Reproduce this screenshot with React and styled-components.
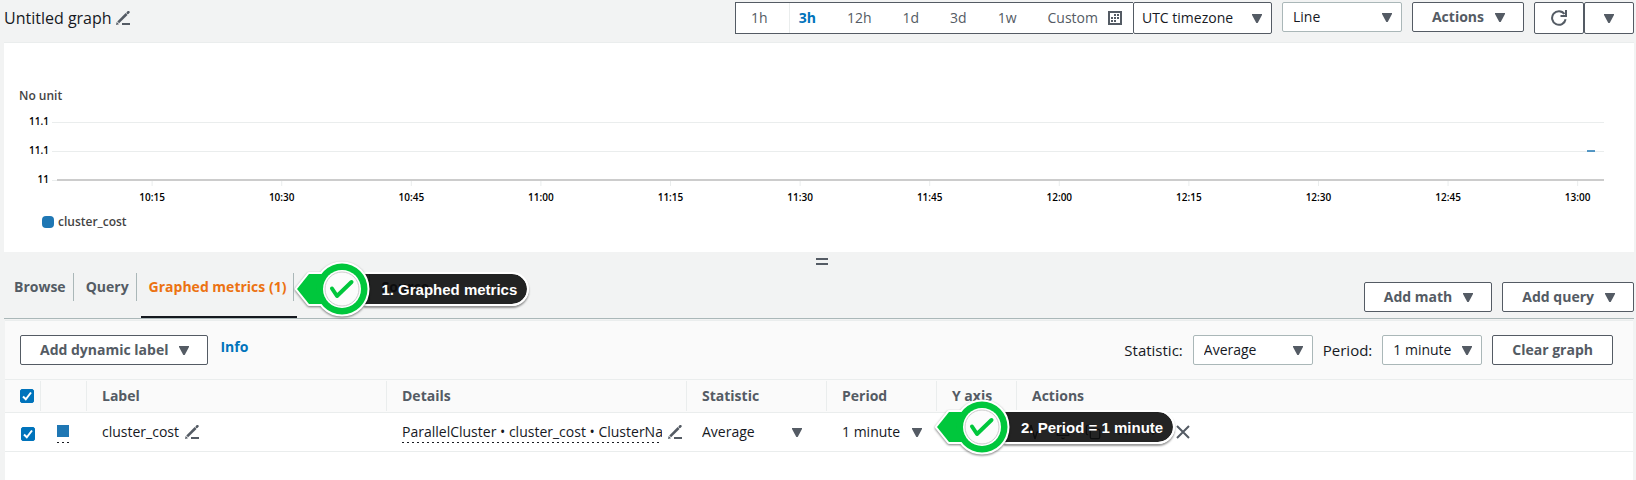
import React from "react";
import styled, { createGlobalStyle, css } from "styled-components";
import { Activity, Bell, ChevronDown, ChevronUp, Copy } from "lucide-react";

const color = {
  page: "#f2f3f3",
  text: "#16191f",
  muted: "#545b64",
  line: "#eaeded",
  outline: "#aab7b8",
  link: "#0073bb",
  accent: "#ec7211",
  series: "#1f77b4",
  green: "#00c73c",
};

const GlobalStyle = createGlobalStyle`
  *, *::before, *::after { box-sizing: border-box; }
  body {
    margin: 0;
    background: ${color.page};
    color: ${color.text};
    font-family: "Open Sans", "Noto Sans", sans-serif;
    font-size: 14px;
    line-height: 20px;
  }
  button, select, input { font: inherit; color: inherit; margin: 0; }
  button { cursor: pointer; }
`;

const Page = styled.div`
  display: flex;
  flex-direction: column;
  min-height: 100vh;
  padding: 0 2px 0 4px;
`;

/* ---------- icons ---------- */

const Arrow = styled.svg.attrs({ viewBox: "0 0 10 9", "aria-hidden": true })`
  width: 10px;
  height: 9px;
  flex: none;
  fill: ${color.muted};
`;

const Caret = (props) => (
  <Arrow {...props}>
    <path d="M0 0h10v1L5.700 9H4.300L0 1z" />
  </Arrow>
);

const PencilIcon = () => (
  <svg width="14" height="14" viewBox="0 0 14 14" fill="none" stroke={color.muted} aria-hidden="true">
    <path d="M2.2 11.3 10.6 3" strokeWidth="2.6" />
    <path d="M11.8 1.800 12.4 1.200" strokeWidth="2.6" strokeLinecap="round" />
    <path d="M0 14 .7 10.9 3 13.2z" fill={color.muted} stroke="none" />
    <path d="M6 13h8" strokeWidth="2" />
  </svg>
);

const CalendarIcon = () => (
  <svg width="14" height="14" viewBox="0 0 14 14" fill="none" stroke={color.muted} aria-hidden="true">
    <rect x="1" y="1" width="12" height="12" strokeWidth="2" />
    <path d="M6 4h5M3 7h8M3 10h5" strokeWidth="2" strokeDasharray="2 1" />
  </svg>
);

const RefreshIcon = () => (
  <svg width="16" height="16" viewBox="0 0 16 16" fill="none" stroke={color.muted} strokeWidth="2" aria-hidden="true">
    <path d="M14.6 9.2A6.8 6.8 0 1 1 13.4 4" />
    <path d="M15 0v6H9.500" />
  </svg>
);

const CloseIcon = () => (
  <svg width="14" height="14" viewBox="0 0 14 14" fill="none" stroke={color.muted} strokeWidth="2" aria-hidden="true">
    <path d="M1 1l12 12M13 1 1 13" />
  </svg>
);

/* ---------- controls ---------- */

const Button = styled.button`
  display: inline-flex;
  align-items: center;
  justify-content: center;
  gap: 11px;
  height: 30px;
  padding: 0 ${(p) => (p.$menu ? 18 : 19)}px 0 19px;
  border: 1px solid ${color.muted};
  border-radius: 2px;
  background: #fff;
  color: ${color.muted};
  font-weight: 700;
  white-space: nowrap;
`;

const IconButton = styled.button`
  display: inline-flex;
  align-items: center;
  justify-content: center;
  padding: 0;
  border: 0;
  background: none;
  color: ${color.muted};
`;

const SplitButton = styled.div`
  display: flex;

  ${IconButton} {
    width: 50px;
    height: 32px;
    border: 1px solid ${color.muted};
    border-radius: 2px;
    background: #fff;
  }
`;

const SelectFrame = styled.span`
  display: inline-grid;
  align-items: center;
  width: ${(p) => p.$width}px;

  > * { grid-area: 1 / 1; }
  > svg {
    justify-self: end;
    margin-right: ${(p) => (p.$variant === "plain" ? 0 : 10)}px;
    pointer-events: none;
  }
`;

const NativeSelect = styled.select`
  appearance: none;
  width: 100%;
  height: ${(p) => (p.$variant === "dark" ? 32 : 30)}px;
  padding: 0 ${(p) => (p.$variant === "plain" ? 0 : 20)}px 0 ${(p) => ({ plain: 0, dark: 8, light: 10 })[p.$variant]}px;
  border: 1px solid ${color.outline};
  border-radius: 2px;
  background: #fff;
  ${(p) => p.$variant === "dark" && css`border-color: ${color.muted};`}
  ${(p) => p.$variant === "plain" && css`border: 0; background: none;`}
`;

const Select = ({ id, label, width, variant = "light", options }) => (
  <SelectFrame $width={width} $variant={variant}>
    <NativeSelect id={id} aria-label={label} $variant={variant}>
      {options.map((o) => (
        <option key={o}>{o}</option>
      ))}
    </NativeSelect>
    <Caret />
  </SelectFrame>
);

const Checkbox = styled.input.attrs({ type: "checkbox" })`
  appearance: none;
  display: block;
  width: 14px;
  height: 14px;
  border: 1px solid ${color.muted};
  border-radius: 2px;
  background: #fff;

  &:checked {
    border-color: ${color.link};
    background: ${color.link}
      url("data:image/svg+xml,%3Csvg xmlns='http://www.w3.org/2000/svg' viewBox='0 0 12 12' fill='none' stroke='white' stroke-width='2'%3E%3Cpath d='M2 6.500l2.800 2.800L10 2.500'/%3E%3C/svg%3E")
      center / 12px no-repeat;
  }
`;

/* ---------- header ---------- */

const Header = styled.header`
  display: flex;
  align-items: flex-start;
  justify-content: space-between;
  height: 42px;
  padding-top: 2px;
`;

const Title = styled.h1`
  display: flex;
  align-items: center;
  gap: 4px;
  margin: 0;
  font-size: 16px;
  font-weight: 400;
  line-height: 32px;
`;

const Controls = styled.div`
  display: flex;
  align-items: flex-start;
  gap: 10px;
`;

const RangeGroup = styled.div`
  display: flex;
`;

const Ranges = styled.div`
  display: flex;
  height: 32px;
  padding-right: 11px;
  border: 1px solid ${color.muted};
  border-right: 0;
  background: #fff;
`;

const RangeButton = styled.button`
  display: flex;
  align-items: center;
  gap: 10px;
  padding: 0 0 0 15px;
  margin-right: 16px;
  border: 0;
  background: none;
  color: ${color.muted};

  &:last-child { margin-right: 0; }

  ${(p) =>
    p.$active &&
    css`
      margin-left: 5px;
      padding-left: 9px;
      border-left: 1px solid ${color.line};
      color: ${color.link};
      font-weight: 700;
    `}
`;

/* ---------- chart ---------- */

const ChartPanel = styled.section`
  padding: 45px 30px 22px 15px;
  border-top: 1px solid ${color.line};
  background: #fff;
  font-size: 12px;
  font-weight: 600;
  line-height: 16px;
  color: #444;
`;

const Plot = styled.svg`
  display: block;
  width: calc(100% - 38px);
  height: 106px;
  margin-left: 38px;
  overflow: visible;

  text {
    font-size: 10px;
    fill: #000;
  }
  .grid { stroke: ${color.line}; }
  .axis { stroke: #ccc; stroke-width: 2; }
  .series { stroke: ${color.series}; stroke-width: 2; opacity: 0.75; }
`;

const Legend = styled.div`
  display: flex;
  align-items: center;
  gap: 4px;
  margin: 4px 0 0 23px;
`;

const LegendMark = styled.span`
  width: 12px;
  height: 12px;
  border-radius: 4px;
  background: ${color.series};
`;

const yTicks = [
  { label: "11.1", y: 18 },
  { label: "11.1", y: 47 },
  { label: "11", y: 76 },
];
const xTicks = ["10:15", "10:30", "10:45", "11:00", "11:15", "11:30", "11:45", "12:00", "12:15", "12:30", "12:45", "13:00"];
const START = 6.15;
const STEP = 8.377;

const Chart = () => (
  <Plot role="img" aria-label="cluster_cost over the last three hours">
    {yTicks.map(({ label, y }) => (
      <g key={y}>
        <line className="grid" x1="-5" x2="100%" y1={y + 0.5} y2={y + 0.5} />
        <text x="-8" y={y + 3} textAnchor="end">{label}</text>
      </g>
    ))}
    <line className="axis" x1="0" x2="100%" y1="76" y2="76" />
    {xTicks.map((label, i) => {
      const x = `${START + i * STEP}%`;
      return (
        <g key={label}>
          <line className="grid" x1={x} x2={x} y1="77" y2="82" />
          <text x={x} y="97" textAnchor="middle">{label}</text>
        </g>
      );
    })}
    <line className="series" x1="98.9%" x2="99.42%" y1="47" y2="47" />
  </Plot>
);

/* ---------- splitter and tabs ---------- */

const Splitter = styled.div`
  display: flex;
  justify-content: center;
  height: 16px;
  padding: 6px 0 0 6px;

  &::before {
    content: "";
    width: 12px;
    height: 7px;
    border: solid ${color.muted};
    border-width: 2px 0;
  }
`;

const TabBar = styled.div`
  display: flex;
  justify-content: space-between;
  height: 51px;
  padding-left: 2px;
  border-bottom: 1px solid ${color.outline};
`;

const Tabs = styled.nav`
  display: flex;
  gap: 1px;
`;

const TabItem = styled.div`
  display: flex;
  position: relative;
`;

const Tab = styled.button`
  display: flex;
  align-items: flex-start;
  padding: 5px 3px 0 8px;
  border: 0;
  border-bottom: 2px solid ${(p) => (p.$active ? color.text : "transparent")};
  background: none;
  color: ${(p) => (p.$active ? color.accent : color.muted)};
  font-weight: 700;
  white-space: nowrap;

  span {
    padding-right: 7px;
    border-right: 1px solid ${(p) => (p.$last ? "transparent" : color.outline)};
    line-height: 28px;
  }
`;

const TabActions = styled.div`
  display: flex;
  align-items: flex-end;
  gap: 10px;
  padding-bottom: 6px;
`;

/* ---------- metrics panel ---------- */

const MetricsPanel = styled.section`
  flex: 1;
  margin: 1px 1px 0;
  border-top: 1px solid ${color.line};
  background: #fff;
`;

const Toolbar = styled.div`
  display: flex;
  justify-content: space-between;
  padding: 14px 20px 14px 15px;
  background: #fafafa;
`;

const ToolbarStart = styled.div`
  display: flex;
  align-items: flex-start;
  gap: 12px;
`;

const ToolbarEnd = styled.div`
  display: flex;
  align-items: center;
  gap: 10px;
`;

const FieldLabel = styled.label`
  font-size: 15px;
`;

const InfoLink = styled.a`
  color: ${color.link};
  font-weight: 700;
  line-height: 24px;
  text-decoration: none;
`;

const Table = styled.table`
  width: 100%;
  table-layout: fixed;
  border-collapse: separate;
  border-spacing: 0;
`;

const Col = styled.col`
  width: ${(p) => (p.$width ? `${p.$width}px` : "auto")};
`;

const HeadCell = styled.th`
  height: 34px;
  padding: 1px 0;
  border: solid ${color.line};
  border-width: 1px 0;
  background: #fafafa;
  color: ${color.muted};
  font-weight: 700;
  text-align: left;
`;

const HeadInner = styled.div`
  display: flex;
  align-items: center;
  height: 30px;
  padding-left: 15px;
  border-right: 1px solid ${(p) => (p.$last ? "transparent" : color.line)};
`;

const Cell = styled.td`
  position: relative;
  height: 39px;
  padding: ${(p) => (p.$marker ? 4 : 0)}px 0 0 ${(p) => p.$pad ?? (p.$marker ? 16 : 15)}px;
  border-bottom: 1px solid ${color.line};
`;

const CellRow = styled.div`
  display: flex;
  align-items: center;
  gap: 6px;
`;

const dots = css`
  repeating-linear-gradient(90deg, ${color.text} 0 2px, transparent 2px 5px) bottom / 100% 1px no-repeat
`;

const Swatch = styled.button`
  display: block;
  width: 12px;
  height: 18px;
  padding: 0;
  border: 0;
  background: ${dots}, linear-gradient(${color.series} 0 0) top / 100% 12px no-repeat;
`;

const DetailText = styled.span`
  width: 260px;
  height: 21px;
  overflow: hidden;
  background: ${dots};
  white-space: nowrap;
`;

const RowActions = styled.div`
  display: flex;

  ${IconButton} {
    width: 30px;
    height: 30px;
  }
`;

/* ---------- callouts ---------- */

const CalloutBox = styled.div`
  position: absolute;
  z-index: 2;
  top: ${(p) => p.$top}px;
  left: 100%;
  display: flex;
  align-items: center;
  margin-left: -3px;
  pointer-events: none;
`;

const CalloutMark = styled.svg`
  position: relative;
  z-index: 1;
  flex: none;
  overflow: visible;
  filter: drop-shadow(0 1px 1px rgba(0, 0, 0, 0.5));
`;

const CalloutLabel = styled.span`
  height: 34px;
  margin-left: -6px;
  padding: 0 10px 0 17px;
  border: 2px solid #fff;
  border-left: 0;
  border-radius: 0 17px 17px 0;
  background: rgba(0, 0, 0, 0.86);
  background-clip: padding-box;
  box-shadow: 0 2px 2px rgba(0, 0, 0, 0.4);
  color: #fff;
  font-family: "Liberation Sans", sans-serif;
  font-size: 15px;
  font-weight: 700;
  line-height: 32px;
  white-space: nowrap;
`;

const Callout = ({ top, children }) => (
  <CalloutBox $top={top}>
    <CalloutMark width="76" height="58" viewBox="0 0 76 58" aria-hidden="true">
      <g stroke="#fff" strokeWidth="4" strokeLinejoin="round" fill="#fff">
        <path d="M3 29 15 14H40V44H15z" />
        <circle cx="48" cy="29" r="25.500" />
      </g>
      <path d="M3 29 15 14H40V44H15z" fill={color.green} />
      <circle cx="48" cy="29" r="25.500" fill={color.green} />
      <circle cx="48" cy="29" r="19" fill="#fff" />
      <circle cx="48" cy="29" r="17" fill="#fcfcfc" stroke="#ccc" />
      <path d="M38 28.500 43 36 57.500 22" fill="none" stroke={color.green} strokeWidth="4" strokeLinecap="round" strokeLinejoin="round" />
    </CalloutMark>
    <CalloutLabel>{children}</CalloutLabel>
  </CalloutBox>
);

/* ---------- page ---------- */

const ranges = ["1h", "3h", "12h", "1d", "3d", "1w"];
const periods = ["1 minute", "5 minutes", "1 hour"];
const statistics = ["Average", "Sum", "Maximum"];
const columns = [
  { title: "", width: 36 },
  { title: "", width: 46 },
  { title: "Label", width: 300 },
  { title: "Details", width: 300 },
  { title: "Statistic", width: 140 },
  { title: "Period", width: 110 },
  { title: "Y axis", width: 80 },
  { title: "Actions" },
];

export default function App() {
  return (
    <Page>
      <GlobalStyle />
      <Header>
        <Title>
          Untitled graph
          <IconButton aria-label="Edit graph name"><PencilIcon /></IconButton>
        </Title>
        <Controls>
          <RangeGroup>
            <Ranges>
              {ranges.map((r) => (
                <RangeButton key={r} $active={r === "3h"}>{r}</RangeButton>
              ))}
              <RangeButton>Custom <CalendarIcon /></RangeButton>
            </Ranges>
            <Select label="Timezone" width={139} variant="dark" options={["UTC timezone", "Local timezone"]} />
          </RangeGroup>
          <Select label="Graph type" width={120} options={["Line", "Stacked area", "Number"]} />
          <Button $menu>Actions <Caret /></Button>
          <SplitButton>
            <IconButton aria-label="Refresh"><RefreshIcon /></IconButton>
            <IconButton aria-label="Refresh options"><Caret /></IconButton>
          </SplitButton>
        </Controls>
      </Header>

      <ChartPanel>
        <div>No unit</div>
        <Chart />
        <Legend><LegendMark />cluster_cost</Legend>
      </ChartPanel>

      <Splitter role="separator" />

      <TabBar>
        <Tabs>
          <TabItem><Tab><span>Browse</span></Tab></TabItem>
          <TabItem><Tab><span>Query</span></Tab></TabItem>
          <TabItem>
            <Tab $active><span>Graphed metrics (1)</span></Tab>
            <Callout top={-8}>1. Graphed metrics</Callout>
          </TabItem>
          <TabItem><Tab><span>Options</span></Tab></TabItem>
          <TabItem><Tab $last><span>Source</span></Tab></TabItem>
        </Tabs>
        <TabActions>
          <Button $menu>Add math <Caret /></Button>
          <Button $menu>Add query <Caret /></Button>
        </TabActions>
      </TabBar>

      <MetricsPanel>
        <Toolbar>
          <ToolbarStart>
            <Button $menu>Add dynamic label <Caret /></Button>
            <InfoLink href="#info">Info</InfoLink>
          </ToolbarStart>
          <ToolbarEnd>
            <FieldLabel htmlFor="statistic">Statistic:</FieldLabel>
            <Select id="statistic" width={120} options={statistics} />
            <FieldLabel htmlFor="period">Period:</FieldLabel>
            <Select id="period" width={100} options={periods} />
            <Button>Clear graph</Button>
          </ToolbarEnd>
        </Toolbar>
        <Table>
          <colgroup>
            {columns.map((c, i) => <Col key={i} $width={c.width} />)}
          </colgroup>
          <thead>
            <tr>
              {columns.map((c, i) => (
                <HeadCell key={i}>
                  <HeadInner $last={i === columns.length - 1}>
                    {i === 0 ? <Checkbox defaultChecked aria-label="Select all metrics" /> : c.title}
                  </HeadInner>
                </HeadCell>
              ))}
            </tr>
          </thead>
          <tbody>
            <tr>
              <Cell $marker><Checkbox defaultChecked aria-label="Select cluster_cost" /></Cell>
              <Cell $marker><Swatch aria-label="Line color" /></Cell>
              <Cell>
                <CellRow>
                  cluster_cost
                  <IconButton aria-label="Edit label"><PencilIcon /></IconButton>
                </CellRow>
              </Cell>
              <Cell>
                <CellRow>
                  <DetailText>ParallelCluster • cluster_cost • ClusterName: hpc</DetailText>
                  <IconButton aria-label="Edit details"><PencilIcon /></IconButton>
                </CellRow>
              </Cell>
              <Cell><Select label="Metric statistic" width={100} variant="plain" options={statistics} /></Cell>
              <Cell>
                <Select label="Metric period" width={80} variant="plain" options={periods} />
                <Callout top={-15}>2. Period = 1 minute</Callout>
              </Cell>
              <Cell />
              <Cell $pad={1}>
                <RowActions>
                  <IconButton aria-label="Anomaly detection"><Activity size={16} /></IconButton>
                  <IconButton aria-label="Create alarm"><Bell size={16} /></IconButton>
                  <IconButton aria-label="Duplicate"><Copy size={16} /></IconButton>
                  <IconButton aria-label="Move up"><ChevronUp size={16} /></IconButton>
                  <IconButton aria-label="Move down"><ChevronDown size={16} /></IconButton>
                  <IconButton aria-label="Remove"><CloseIcon /></IconButton>
                </RowActions>
              </Cell>
            </tr>
          </tbody>
        </Table>
      </MetricsPanel>
    </Page>
  );
}
